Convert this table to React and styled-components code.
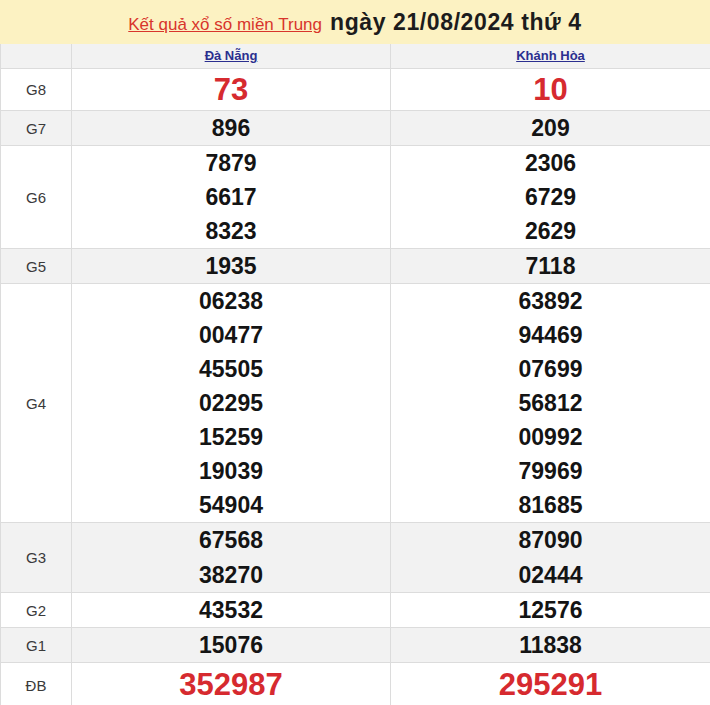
import React from 'react';
import styled, { createGlobalStyle } from 'styled-components';

const GlobalStyle = createGlobalStyle`
  html, body {
    margin: 0;
    padding: 0;
    background: #fff;
    font-family: "Liberation Sans", Arial, sans-serif;
  }
  * { box-sizing: border-box; }
`;

const Board = styled.div`
  width: 710px;
`;

const Banner = styled.div`
  height: 44px;
  line-height: 44px;
  background: #fcf2c2;
  text-align: center;
  white-space: nowrap;
`;

const BannerLink = styled.a`
  font-size: 17px;
  color: #d8352c;
  text-decoration: underline;
  margin-right: 8px;
`;

const BannerTitle = styled.span`
  font-size: 23px;
  font-weight: bold;
  letter-spacing: 0.6px;
  color: #1c1c1c;
`;

const Row = styled.div`
  display: grid;
  grid-template-columns: 72px 319px 319px;
  background: ${p => (p.$shade ? '#f2f2f2' : '#fff')};
  border-bottom: ${p => (p.$last ? 'none' : '1px solid #dcdcdc')};
`;

const Label = styled.div`
  display: flex;
  align-items: center;
  justify-content: center;
  border-left: 1px solid #dcdcdc;
  border-right: 1px solid #dcdcdc;
  font-size: 15px;
  color: #3a3a3a;
`;

const Cell = styled.div`
  display: flex;
  flex-direction: column;
  align-items: center;
  justify-content: center;
  border-right: ${p => (p.$edge ? '1px solid #dcdcdc' : 'none')};
`;

const Province = styled.a`
  height: 24px;
  line-height: 24px;
  font-size: 13px;
  font-weight: bold;
  color: #2b2f8f;
  text-decoration: underline;
`;

const Num = styled.div`
  height: ${p => p.$h || 34}px;
  line-height: ${p => p.$h || 34}px;
  font-size: ${p => (p.$big ? 31 : 23)}px;
  font-weight: bold;
  color: ${p => (p.$big ? '#d62a2f' : '#141414')};
`;

const prizes = [
  { name: 'G8', a: ['73'], b: ['10'], big: true, h: 41 },
  { name: 'G7', a: ['896'], b: ['209'] },
  { name: 'G6', a: ['7879', '6617', '8323'], b: ['2306', '6729', '2629'] },
  { name: 'G5', a: ['1935'], b: ['7118'] },
  {
    name: 'G4',
    a: ['06238', '00477', '45505', '02295', '15259', '19039', '54904'],
    b: ['63892', '94469', '07699', '56812', '00992', '79969', '81685'],
  },
  { name: 'G3', a: ['67568', '38270'], b: ['87090', '02444'], h: 34.5 },
  { name: 'G2', a: ['43532'], b: ['12576'] },
  { name: 'G1', a: ['15076'], b: ['11838'] },
  { name: 'ĐB', a: ['352987'], b: ['295291'], big: true, h: 44 },
];

const Numbers = ({ list, big, h }) =>
  list.map((n, i) => (
    <Num key={i} $big={big} $h={h}>
      {n}
    </Num>
  ));

export default function App() {
  return (
    <Board>
      <GlobalStyle />
      <Banner>
        <BannerLink>Kết quả xổ số miền Trung</BannerLink>
        <BannerTitle>ngày 21/08/2024 thứ 4</BannerTitle>
      </Banner>
      <Row $shade>
        <Label />
        <Cell $edge>
          <Province>Đà Nẵng</Province>
        </Cell>
        <Cell>
          <Province>Khánh Hòa</Province>
        </Cell>
      </Row>
      {prizes.map((p, i) => (
        <Row key={p.name} $shade={i % 2 === 1} $last={i === prizes.length - 1}>
          <Label>{p.name}</Label>
          <Cell $edge>
            <Numbers list={p.a} big={p.big} h={p.h} />
          </Cell>
          <Cell>
            <Numbers list={p.b} big={p.big} h={p.h} />
          </Cell>
        </Row>
      ))}
    </Board>
  );
}
